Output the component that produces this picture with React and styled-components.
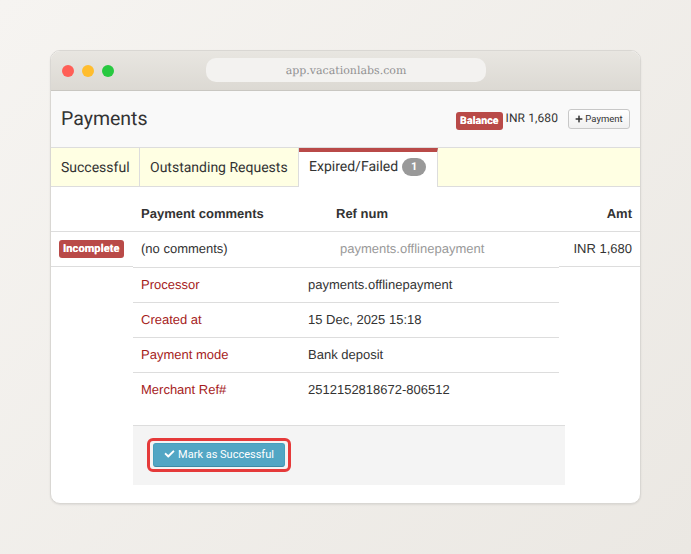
import React from "react";
import styled, { createGlobalStyle } from "styled-components";
import { FaPlus, FaCheck } from "react-icons/fa";

const Global = createGlobalStyle`
  html, body { margin: 0; padding: 0; }
  body { width: 691px; height: 554px; overflow: hidden; background: linear-gradient(135deg, #f6f4f1 0%, #ebe8e3 100%); font-family: "Liberation Sans", Arial, sans-serif; color: #333; text-rendering: geometricPrecision; }
`;
const Page = styled.div`padding: 50px; box-sizing: border-box; width: 691px; height: 554px;`;
const Window = styled.div`
  width: 591px; height: 454px; box-sizing: border-box; background: #fff; border: 1px solid #d9d7d3; border-radius: 10px; overflow: hidden;
  box-shadow: 0 1px 2px rgba(0,0,0,.08); display: flex; flex-direction: column;
`;
const TitleBar = styled.div`
  height: 40px; flex: none; box-sizing: border-box; background: linear-gradient(#e8e6e1, #dcd9d3); border-bottom: 1px solid #c9c7c2;
  display: flex; align-items: center; padding-left: 11px; position: relative;
`;
const Dot = styled.span`width: 12px; height: 12px; border-radius: 50%; background: ${p => p.$c}; margin-right: 8px;`;
const Url = styled.div`
  width: 280px; height: 24px; margin-left: 84px; margin-top: -2px; border-radius: 10px; background: #f3f2f0; color: #909090;
  font: 400 11px/26px "DejaVu Serif", "Liberation Serif", serif; text-align: center;
`;
const Header = styled.div`
  height: 57px; flex: none; box-sizing: border-box; background: #f9f9f9; border-bottom: 1px solid #ddd; display: flex; align-items: center; padding: 0 10px;
`;
const Title = styled.h1`margin: 0 auto 0 0; font: 400 19.5px/1 Roboto, sans-serif; color: #333;`;
const Label = styled.span`
  background: #b94a48; color: #fff; font: 700 10.5px/18px Roboto, "Liberation Sans", sans-serif; padding: 0 4px; border-radius: 3px; display: inline-block; letter-spacing: .1px; margin-top: 3px;
  text-shadow: 0 0 .6px #fff;
`;
const Balance = styled.span`font: 400 12px/1 Roboto, sans-serif; color: #333; margin: 0 10px 2px 3px; letter-spacing: .1px;`;
const SmallBtn = styled.button`
  height: 20px; width: 62px; box-sizing: border-box; padding: 0; border: 1px solid #c8c8c8; border-radius: 3px; background: linear-gradient(#fff, #f0f0f0); color: #333;
  font: 400 9.5px/1 Roboto, sans-serif; display: flex; align-items: center; justify-content: center; gap: 2px;
  svg { width: 8px; height: 8px; }
`;
const Tabs = styled.div`height: 39px; flex: none; box-sizing: border-box; display: flex; background: #ffffe3; border-bottom: 1px solid #ddd; font: 400 14px/1 Roboto, sans-serif;`;
const Tab = styled.div`
  box-sizing: border-box; height: ${p => p.$active ? "39px" : "38px"}; width: ${p => p.$w}px; padding: ${p => p.$active ? "0 0 5px 10px" : "2px 0 0 10px"}; border-right: 1px solid #ddd; display: flex; align-items: center; color: #333; gap: 4px;
  ${p => p.$active && "background: #fff; border-top: 4px solid #b94a48;"}
`;
const Pill = styled.span`
  background: #999; color: #fff; border-radius: 9px; width: 24px; height: 18px; font: 700 11px/18px Roboto, sans-serif; text-align: center;
`;
const Grid = styled.div`display: grid; grid-template-columns: 82px 203px 223px 1fr; font-size: 13px;`;
const Head = styled.div`
  height: 45px; box-sizing: border-box; border-bottom: 1px solid #ddd; padding: 20px 8px 0 ${p => p.$pl ?? 8}px; font-weight: 700; line-height: 14px; color: #333; text-align: ${p => p.$right ? "right" : "left"};
`;
const Cell = styled.div`
  height: ${p => p.$h}px; box-sizing: border-box; border-bottom: 1px solid #ddd; display: flex; align-items: center; padding: 0 8px 2px ${p => p.$pl ?? 8}px; color: ${p => p.$muted ? "#999" : "#333"};
  justify-content: ${p => p.$right ? "flex-end" : "flex-start"};
`;
const Badge = styled(Label)`margin-top: 2px; font-size: 11px;`;
const Details = styled.div`width: 426px; margin-left: 82px; display: grid; grid-template-columns: 167px 1fr; font-size: 13px;`;
const Key = styled.div`height: 35px; box-sizing: border-box; border-bottom: ${p => p.$last ? "none" : "1px solid #ddd"}; display: flex; align-items: center; padding: 0 0 2px 8px; color: #a61c1c;`;
const Val = styled(Key)`color: #333;`;
const Footer = styled.div`
  width: 432px; height: 60px; box-sizing: border-box; margin: 17px 0 0 82px; background: #f4f4f4; border-top: 1px solid #ddd; padding: 12px 0 0 14px;
`;
const Highlight = styled.div`
  display: inline-block; padding: 2px 3px; border: 3px solid #e53a3a; border-radius: 6px; line-height: 0;
`;
const Primary = styled.button`
  width: 132px; height: 24px; padding: 0 0 2px; border: 1px solid #46a0bd; border-bottom-color: #3d8aa4; border-radius: 3px; background: #52a6c4; color: #fff;
  font: 400 11px/1 Roboto, sans-serif; display: flex; align-items: center; justify-content: center; gap: 3px;
  svg { width: 11px; height: 10px; }
`;

export default function App() {
  return (
    <Page>
      <Global />
      <Window>
        <TitleBar>
          <Dot $c="#ff5f57" /><Dot $c="#ffbd2e" /><Dot $c="#28c940" />
          <Url>app.vacationlabs.com</Url>
        </TitleBar>
        <Header>
          <Title>Payments</Title>
          <Label>Balance</Label>
          <Balance>INR 1,680</Balance>
          <SmallBtn><FaPlus /> Payment</SmallBtn>
        </Header>
        <Tabs>
          <Tab $w={89}>Successful</Tab>
          <Tab $w={159}>Outstanding Requests</Tab>
          <Tab $w={139} $active>Expired/Failed <Pill>1</Pill></Tab>
        </Tabs>
        <Grid>
          <Head />
          <Head>Payment comments</Head>
          <Head $pl={0}>Ref num</Head>
          <Head $right>Amt</Head>
          <Cell $h={35}><Badge>Incomplete</Badge></Cell>
          <Cell $h={36}>(no comments)</Cell>
          <Cell $h={36} $muted $pl={4}>payments.offlinepayment</Cell>
          <Cell $h={35} $right>INR 1,680</Cell>
        </Grid>
        <Details>
          <Key>Processor</Key><Val>payments.offlinepayment</Val>
          <Key>Created at</Key><Val>15 Dec, 2025 15:18</Val>
          <Key>Payment mode</Key><Val>Bank deposit</Val>
          <Key $last>Merchant Ref#</Key><Val $last>2512152818672-806512</Val>
        </Details>
        <Footer>
          <Highlight>
            <Primary><FaCheck /> Mark as Successful</Primary>
          </Highlight>
        </Footer>
      </Window>
    </Page>
  );
}
